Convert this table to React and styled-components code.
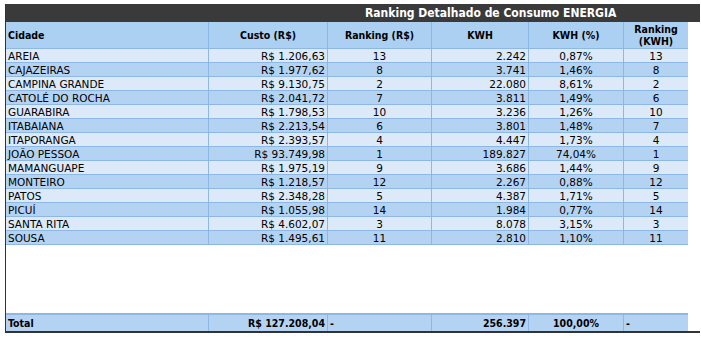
import React from 'react';
import styled, { createGlobalStyle } from 'styled-components';

const GlobalStyle = createGlobalStyle`
  body {
    margin: 0;
    padding: 4px 0 0 5px;
    background: #fff;
    font-family: Tahoma, 'DejaVu Sans', sans-serif;
  }
`

const COLS = '203px 119px 104px 97px 95px 64px';

const Frame = styled.div`
  width: 694px;
  height: 327px;
  display: flex;
  flex-direction: column;
  border-left: 1px solid #333;
  border-bottom: 2px solid #333;
`

const TitleBar = styled.div`
  height: 18px;
  background: #3a3a3a;
  color: #fff;
  font-family: 'DejaVu Sans Condensed', 'DejaVu Sans', sans-serif;
  font-stretch: condensed;
  font-weight: 700;
  font-size: 12px;
  line-height: 18px;
  padding-left: 359px;
`

const Table = styled.div`
  width: 682px;
  flex: 1;
  display: flex;
  flex-direction: column;
`

const Row = styled.div`
  display: grid;
  grid-template-columns: ${COLS};
  height: ${p => p.$h || 14}px;
  background: ${p => p.$bg};
  border-top: ${p => p.$top || 0}px solid #8db8e6;
  font-size: 10.5px;
  color: #000;
`

const Cell = styled.div`
  display: flex;
  align-items: center;
  justify-content: ${p => p.$align === 'right' ? 'flex-end' : p.$align === 'center' ? 'center' : 'flex-start'};
  text-align: center;
  padding: 0 2px 0 2px;
  border-right: 1px solid #8db8e6;
  border-bottom: ${p => p.$nob ? 0 : 1}px solid #8db8e6;
  font-family: ${p => p.$bold ? "'DejaVu Sans Condensed', 'DejaVu Sans', sans-serif" : 'inherit'};
  font-stretch: ${p => p.$bold ? 'condensed' : 'normal'};
  font-weight: ${p => p.$bold ? 700 : 400};
  line-height: 12px;
  white-space: nowrap;
  &:last-child { border-right: 0; }
`

const Spacer = styled.div`
  flex: 1;
`

const data = [
  ['AREIA', 'R$ 1.206,63', '13', '2.242', '0,87%', '13'],
  ['CAJAZEIRAS', 'R$ 1.977,62', '8', '3.741', '1,46%', '8'],
  ['CAMPINA GRANDE', 'R$ 9.130,75', '2', '22.080', '8,61%', '2'],
  ['CATOLÉ DO ROCHA', 'R$ 2.041,72', '7', '3.811', '1,49%', '6'],
  ['GUARABIRA', 'R$ 1.798,53', '10', '3.236', '1,26%', '10'],
  ['ITABAIANA', 'R$ 2.213,54', '6', '3.801', '1,48%', '7'],
  ['ITAPORANGA', 'R$ 2.393,57', '4', '4.447', '1,73%', '4'],
  ['JOÃO PESSOA', 'R$ 93.749,98', '1', '189.827', '74,04%', '1'],
  ['MAMANGUAPE', 'R$ 1.975,19', '9', '3.686', '1,44%', '9'],
  ['MONTEIRO', 'R$ 1.218,57', '12', '2.267', '0,88%', '12'],
  ['PATOS', 'R$ 2.348,28', '5', '4.387', '1,71%', '5'],
  ['PICUÍ', 'R$ 1.055,98', '14', '1.984', '0,77%', '14'],
  ['SANTA RITA', 'R$ 4.602,07', '3', '8.078', '3,15%', '3'],
  ['SOUSA', 'R$ 1.495,61', '11', '2.810', '1,10%', '11'],
];

const aligns = ['left', 'right', 'center', 'right', 'center', 'center'];

const App = () => {
  return (
    <>
      <GlobalStyle />
      <Frame>
        <TitleBar>Ranking Detalhado de Consumo ENERGIA</TitleBar>
        <Table>
          <Row $h={27} $bg="#acd0f2">
            <Cell $bold>Cidade</Cell>
            <Cell $bold $align="center">Custo (R$)</Cell>
            <Cell $bold $align="center">Ranking (R$)</Cell>
            <Cell $bold $align="center">KWH</Cell>
            <Cell $bold $align="center">KWH (%)</Cell>
            <Cell $bold $align="center">Ranking<br />(KWH)</Cell>
          </Row>
          {data.map((r, i) => (
            <Row key={i} $bg={i % 2 === 0 ? '#dbe9f8' : '#b4d3f3'}>
              {r.map((v, j) => (
                <Cell key={j} $align={aligns[j]}>{v}</Cell>
              ))}
            </Row>
          ))}
          <Spacer />
          <Row $h={16} $top={2} $bg="#b4d3f3">
            <Cell $bold $nob>Total</Cell>
            <Cell $bold $nob $align="right">R$ 127.208,04</Cell>
            <Cell $bold $nob>-</Cell>
            <Cell $bold $nob $align="right">256.397</Cell>
            <Cell $bold $nob $align="center">100,00%</Cell>
            <Cell $bold $nob>-</Cell>
          </Row>
        </Table>
      </Frame>
    </>
  );
};

export default App;
